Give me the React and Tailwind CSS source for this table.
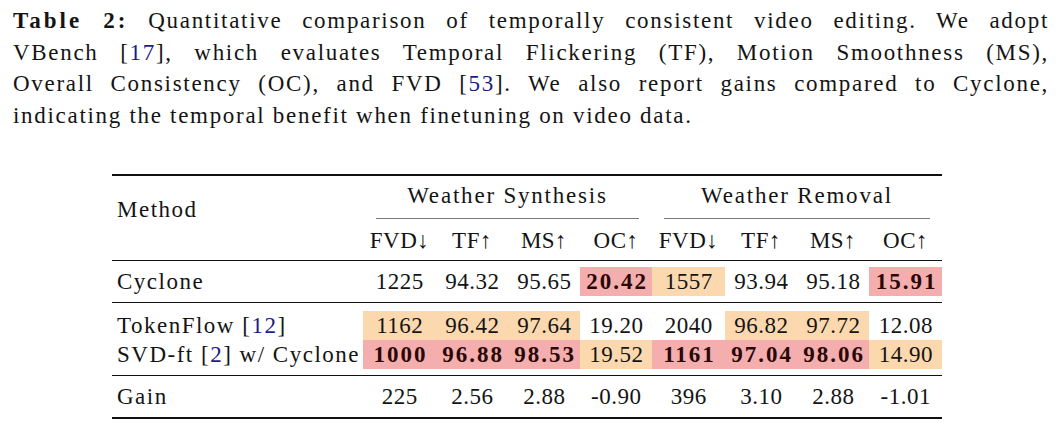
import React from "react";

const cols = "grid grid-cols-[251px_73px_72px_72px_72px_73px_72px_72px_73px]";

const bg = {
  o: "bg-[#fcd8ae]",
  p: "bg-[#f4aeae]",
};

const Ref = ({ n }) => (
  <>
    [<span className="text-[#1c1c8a]">{n}</span>]
  </>
);

const rows = [
  {
    name: "Cyclone",
    cells: [
      { v: "1225" },
      { v: "94.32" },
      { v: "95.65" },
      { v: "20.42", c: "p", b: true },
      { v: "1557", c: "o" },
      { v: "93.94" },
      { v: "95.18" },
      { v: "15.91", c: "p", b: true },
    ],
  },
  {
    name: (
      <>
        TokenFlow <Ref n="12" />
      </>
    ),
    cells: [
      { v: "1162", c: "o" },
      { v: "96.42", c: "o" },
      { v: "97.64", c: "o" },
      { v: "19.20" },
      { v: "2040" },
      { v: "96.82", c: "o" },
      { v: "97.72", c: "o" },
      { v: "12.08" },
    ],
  },
  {
    name: (
      <>
        SVD-ft <Ref n="2" /> w/ Cyclone
      </>
    ),
    cells: [
      { v: "1000", c: "p", b: true },
      { v: "96.88", c: "p", b: true },
      { v: "98.53", c: "p", b: true },
      { v: "19.52", c: "o" },
      { v: "1161", c: "p", b: true },
      { v: "97.04", c: "p", b: true },
      { v: "98.06", c: "p", b: true },
      { v: "14.90", c: "o" },
    ],
  },
  {
    name: "Gain",
    cells: [
      { v: "225" },
      { v: "2.56" },
      { v: "2.88" },
      { v: "-0.90" },
      { v: "396" },
      { v: "3.10" },
      { v: "2.88" },
      { v: "-1.01" },
    ],
  },
];

const metrics = ["FVD↓", "TF↑", "MS↑", "OC↑", "FVD↓", "TF↑", "MS↑", "OC↑"];

const Row = ({ row }) => (
  <div className={`${cols} h-[29px] leading-[29px]`}>
    <div className="pl-[5px] whitespace-nowrap tracking-[1.5px]">{row.name}</div>
    {row.cells.map((cell, i) => (
      <div
        key={i}
        className={`text-center whitespace-nowrap ${cell.c ? bg[cell.c] : ""} ${
          cell.b
            ? "font-bold tracking-[2px] pl-[2px] text-[#2a0808]"
            : "tracking-[0.5px] pl-[0.5px]"
        }`}
      >
        {cell.v}
      </div>
    ))}
  </div>
);

export default function App() {
  return (
    <div className="w-[1062px] h-[432px] bg-white overflow-hidden font-['Liberation_Serif',serif] text-[#141414]">
      <div className="pl-[13px] pr-[13px] pt-[5px] text-[23px] leading-[31.5px] tracking-[1.7px]">
        <div className="[text-align-last:justify]">
          <span className="font-bold tracking-[3px]">Table 2:</span> Quantitative comparison of temporally consistent
          video editing. We adopt
        </div>
        <div className="[text-align-last:justify]">
          VBench <Ref n="17" />, which evaluates Temporal Flickering (TF), Motion Smoothness (MS),
        </div>
        <div className="[text-align-last:justify]">
          Overall Consistency (OC), and FVD <Ref n="53" />. We also report gains compared to Cyclone,
        </div>
        <div>indicating the temporal benefit when finetuning on video data.</div>
      </div>

      <div className="ml-[112px] mt-[43px] w-[830px] text-[23px]">
        <div className={`${cols} border-t-2 border-[#111] pt-[5px] pb-[5px]`}>
          <div className="row-span-3 pl-[5px] pt-[14px] leading-[29px] tracking-[1.5px]">Method</div>
          <div className="col-span-4 text-center h-[29px] leading-[29px] tracking-[1.8px]">
            Weather Synthesis
          </div>
          <div className="col-span-4 text-center h-[29px] leading-[29px] tracking-[1.8px]">
            Weather Removal
          </div>
          <div className="col-span-4 pt-[8px] pb-[7px] px-[13px]">
            <div className="h-px bg-[#7a7a7a]" />
          </div>
          <div className="col-span-4 pt-[8px] pb-[7px] px-[12px]">
            <div className="h-px bg-[#7a7a7a]" />
          </div>
          {metrics.map((m, i) => (
            <div key={i} className="text-center h-[29px] leading-[29px] whitespace-nowrap tracking-[0.5px]">
              {m}
            </div>
          ))}
        </div>

        <div className="border-t border-[#111] pt-[6px] pb-[6px]">
          <Row row={rows[0]} />
        </div>
        <div className="border-t border-[#111] pt-[8px] pb-[6px]">
          <Row row={rows[1]} />
          <Row row={rows[2]} />
        </div>
        <div className="border-t border-b-2 border-[#111] pt-[6px] pb-[6px]">
          <Row row={rows[3]} />
        </div>
      </div>
    </div>
  );
}
